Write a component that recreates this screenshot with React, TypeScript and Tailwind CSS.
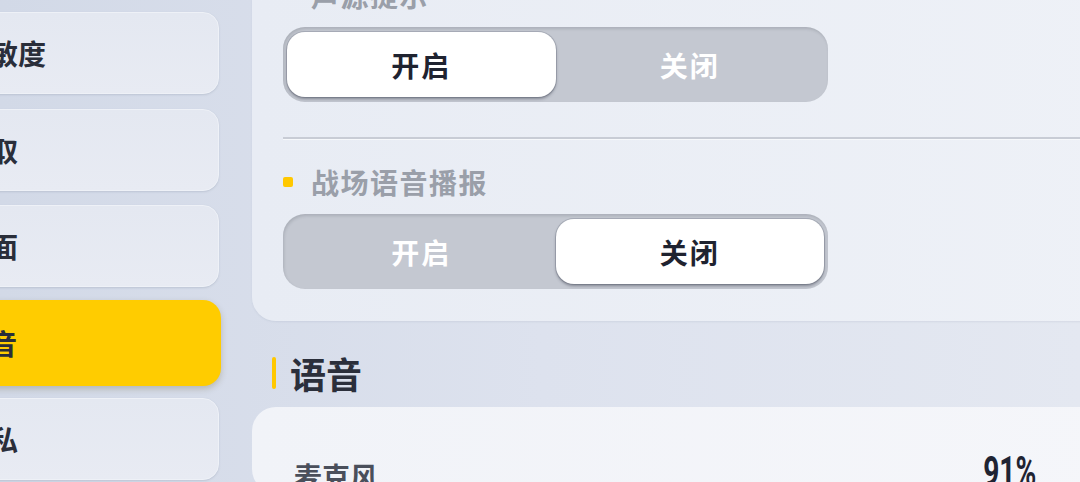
import React from "react";

const CJK = { fontFamily: '"Noto Sans CJK SC", "Noto Sans", sans-serif' };

function Segment({ active }: { active: 0 | 1 }) {
  const items = ["开启", "关闭"];
  return (
    <div className="w-[545px] h-[75px] rounded-[22px] bg-[#c4c8d1] px-[4px] py-[5px] flex shadow-[inset_1px_2px_3px_rgba(60,66,80,0.18)]">
      {items.map((t, i) =>
        i === active ? (
          <div
            key={t}
            className="flex-1 h-full rounded-[18px] bg-white flex items-center justify-center text-[28px] font-bold tracking-[2px] text-[#1f2330] shadow-[0_2px_3px_rgba(50,55,70,0.45),0_0_0_1px_rgba(120,125,140,0.35)]"
          >
            {t}
          </div>
        ) : (
          <div
            key={t}
            className="flex-1 h-full flex items-center justify-center text-[28px] font-bold tracking-[2px] text-white"
          >
            {t}
          </div>
        )
      )}
    </div>
  );
}

function Label({ text }: { text: string }) {
  return (
    <div className="flex items-center h-[36px]">
      <div className="w-[10px] h-[10px] rounded-[2px] bg-[#ffc800]" />
      <div className="ml-[18px] text-[28px] leading-[36px] font-bold tracking-[1.5px] text-[#9a9fa9]">
        {text}
      </div>
    </div>
  );
}

export default function App() {
  const tabs = ["灵敏度", "拾取", "画面", "声音", "隐私"];
  return (
    <div
      className="w-[1080px] h-[482px] overflow-hidden flex bg-gradient-to-r from-[#d2d9e7] via-[#dde2ee] to-[#e4e8f1]"
      style={CJK}
    >
      {/* Sidebar */}
      <div className="-ml-[61px] w-[280px] shrink-0 pt-[12px] flex flex-col gap-[14.5px]">
        {tabs.map((t, i) =>
          i === 3 ? (
            <div
              key={t}
              className="h-[86px] -my-[2px] w-[282px] rounded-[18px] bg-[#ffcc00] flex items-center pl-[22px] text-[28px] font-bold text-[#2a2e3a] shadow-[0_3px_6px_rgba(90,80,30,0.25)]"
            >
              {t}
            </div>
          ) : (
            <div
              key={t}
              className="h-[82px] w-[280px] rounded-[16px] bg-gradient-to-b from-[#e4e8f1] to-[#e8ebf3] border border-[#eef1f7] flex items-center pl-[22px] text-[28px] font-bold text-[#2a2e3a] shadow-[0_1px_2px_rgba(120,130,150,0.25)]"
            >
              {t}
            </div>
          )
        )}
      </div>

      {/* Main */}
      <div className="ml-[33px] flex flex-col shrink-0">
        <div className="-mt-[60px] w-[880px] rounded-[24px] bg-gradient-to-r from-[#e8ecf4] to-[#eef1f7] pl-[31px] pt-[37px] pb-[32px] shadow-[0_1px_2px_rgba(150,160,180,0.2)]">
          <Label text="声源提示" />
          <div className="mt-[14px]">
            <Segment active={0} />
          </div>
          <div className="mt-[35px] h-[2px] bg-[#c8ccd5]" />
          <div className="h-[1px] bg-[#f6f8fb]" />
          <div className="mt-[24px]">
            <Label text="战场语音播报" />
          </div>
          <div className="mt-[14px]">
            <Segment active={1} />
          </div>
        </div>

        <div className="mt-[30px] h-[44px] flex items-center">
          <div className="ml-[20px] w-[4px] h-[32px] rounded-full bg-[#ffc800]" />
          <div className="ml-[14px] text-[36px] leading-[44px] font-bold text-[#2b2f3b]">
            语音
          </div>
        </div>

        <div className="mt-[12px] w-[880px] h-[200px] rounded-[24px] bg-gradient-to-r from-[#f1f3f8] to-[#f5f6fa] pl-[42px] pt-[44px]">
          <div className="w-[742px] flex justify-between items-start">
            <div className="mt-[11px] text-[28px] leading-none font-bold text-[#4a4f5b]">
              麦克风
            </div>
            <span
              className="inline-block text-[42px] leading-none font-bold text-[#1f2433] scale-x-[0.67] origin-right"
              style={{ fontFamily: 'Roboto, "Liberation Sans", sans-serif' }}
            >
              91%
            </span>
          </div>
        </div>
      </div>
    </div>
  );
}
